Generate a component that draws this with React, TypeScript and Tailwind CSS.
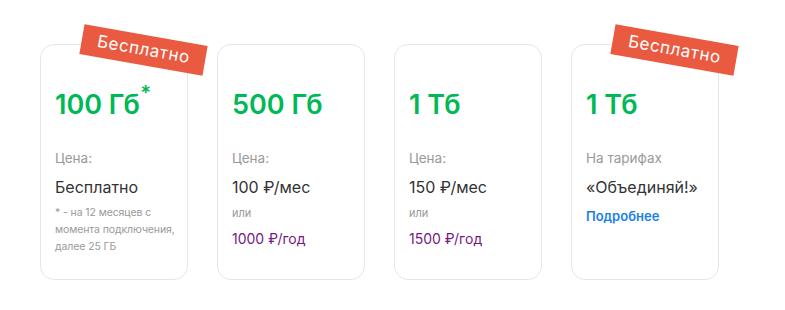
import React from "react";

type Plan = {
  size: string;
  star?: boolean;
  badge?: boolean;
  label: string;
  price: string;
  note?: string;
  yearly?: string;
  link?: string;
};

const plans: Plan[] = [
  {
    size: "100 Гб",
    star: true,
    badge: true,
    label: "Цена:",
    price: "Бесплатно",
    note: "* - на 12 месяцев с момента подключения, далее 25 ГБ",
  },
  { size: "500 Гб", label: "Цена:", price: "100 ₽/мес", yearly: "1000 ₽/год" },
  { size: "1 Тб", label: "Цена:", price: "150 ₽/мес", yearly: "1500 ₽/год" },
  {
    size: "1 Тб",
    badge: true,
    label: "На тарифах",
    price: "«Объединяй!»",
    link: "Подробнее",
  },
];

const Card: React.FC<{ plan: Plan }> = ({ plan }) => (
  <div className="relative w-[148px] h-[236px] shrink-0 rounded-[14px] border border-[#e6e6e6] bg-white pl-[14px] pr-[8px] pt-[44px]">
    {plan.badge && (
      <div className="absolute left-[40px] top-[-10px] w-[125px] h-[30px] rotate-[10deg] bg-[#ea5a40] flex items-center justify-center text-white text-[17px] tracking-[0.6px]">
        Бесплатно
      </div>
    )}
    <div className="relative inline-block text-[#00b956] text-[27px] leading-[32px] font-semibold whitespace-nowrap">
      {plan.size}
      {plan.star && (
        <span className="absolute right-[-11px] top-[-6px] text-[20px] leading-[20px]">*</span>
      )}
    </div>
    <div className="mt-[28px] text-[13.5px] leading-[18px] text-[#999]">{plan.label}</div>
    <div className="mt-[10px] text-[16px] leading-[20px] text-[#333] whitespace-nowrap">{plan.price}</div>
    {plan.note && (
      <div className="mt-[7px] text-[10.5px] leading-[17px] text-[#999] tracking-[-0.1px]">{plan.note}</div>
    )}
    {plan.yearly && (
      <>
        <div className="mt-[8px] text-[11px] leading-[16px] text-[#999]">или</div>
        <div className="mt-[9px] text-[14px] leading-[18px] text-[#731982]">{plan.yearly}</div>
      </>
    )}
    {plan.link && (
      <div className="mt-[10px] text-[13px] leading-[18px] font-semibold text-[#1a7fe8]">{plan.link}</div>
    )}
  </div>
);

export default function App() {
  return (
    <div
      className="w-[785px] h-[310px] bg-white overflow-hidden"
      style={{ fontFamily: "Inter, 'Noto Sans', sans-serif" }}
    >
      <div className="flex gap-[29px] pl-[40px] pt-[44px]">
        {plans.map((p, i) => (
          <Card key={i} plan={p} />
        ))}
      </div>
    </div>
  );
}
